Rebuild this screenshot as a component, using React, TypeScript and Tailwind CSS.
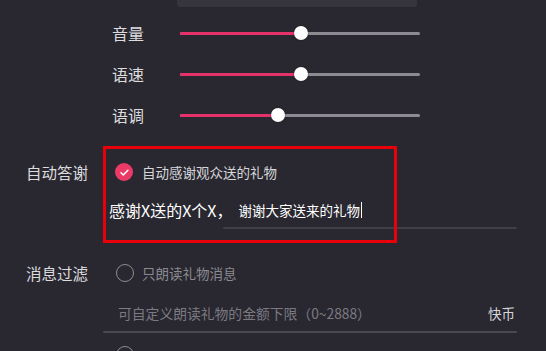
import { useState } from 'react'

interface SliderRowProps {
  label: string
  value: number
}

function SliderRow({ label, value }: SliderRowProps) {
  return (
    <div className="flex h-[41px] items-center">
      <div className="ml-[112px] w-[68px] text-[16px] leading-none text-[#dcdcdf]">{label}</div>
      <div className="relative h-[14px] w-[240px]">
        {/* track */}
        <div className="absolute left-0 right-0 top-[6px] h-[3px] rounded-full bg-[#8c8b92]" />
        <div
          className="absolute left-0 top-[6px] h-[3px] rounded-full bg-[#e6326a]"
          style={{ width: `${value}%` }}
        />
        {/* thumb */}
        <div
          className="absolute top-0 h-[14px] w-[14px] -translate-x-1/2 rounded-full bg-white shadow-[0_0_2px_rgba(0,0,0,0.5)]"
          style={{ left: `${value}%` }}
        />
      </div>
    </div>
  )
}

export default function App() {
  const [thanks, setThanks] = useState(true)

  return (
    <div
      className="relative h-[351px] w-[546px] overflow-hidden bg-[#292830]"
      style={{ fontFamily: '"Noto Sans CJK SC", "Noto Sans", sans-serif' }}
    >
      {/* top panel edge */}
      <div className="ml-[177px] h-[7px] w-[240px] rounded-b-[3px] bg-[#36353d]" />

      {/* voice sliders */}
      <div className="mt-[5px]">
        <SliderRow label="音量" value={50.5} />
        <SliderRow label="语速" value={50.5} />
        <SliderRow label="语调" value={41} />
      </div>

      {/* auto thanks */}
      <div className="mt-[25px] flex">
        <div className="w-[100px] pl-[26px] text-[15.5px] leading-[24px] text-[#dcdcdf]">自动答谢</div>
        <div className="flex-1">
          <button
            className="ml-[15px] flex h-[24px] items-center gap-[9px]"
            onClick={() => setThanks(!thanks)}
          >
            <span className="flex h-[18px] w-[18px] items-center justify-center rounded-full bg-[#ec3a67]">
              {thanks && (
                <svg width="11" height="11" viewBox="0 0 12 12" fill="none">
                  <path d="M2.2 6.3l2.5 2.4 5-5.2" stroke="white" strokeWidth="1.7" strokeLinecap="round" strokeLinejoin="round" />
                </svg>
              )}
            </span>
            <span className="text-[13.5px] text-[#d6d6da]">自动感谢观众送的礼物</span>
          </button>
          <div className="mt-[15px] flex h-[22px] items-center pl-[9px] text-white">
            <span className="text-[16px]">感谢X送的X个X，</span>
            <span className="ml-[6px] text-[13.5px]">谢谢大家送来的礼物</span>
            <span className="ml-[1px] h-[16px] w-px bg-white" />
          </div>
          <div className="ml-[123px] mt-[6px] h-[2px] w-[294px] rounded-full bg-[#403f47]" />
        </div>
      </div>

      {/* message filter */}
      <div className="mt-[32px] flex">
        <div className="w-[100px] pl-[26px] text-[15.5px] leading-[24px] text-[#dcdcdf]">消息过滤</div>
        <div className="w-[417px]">
          <div className="ml-[16px] flex h-[24px] items-center gap-[8px]">
            <span className="h-[18px] w-[18px] rounded-full border-[1.5px] border-[#8d8c93]" />
            <span className="text-[13.5px] text-[#8b8a91]">只朗读礼物消息</span>
          </div>
          <div className="mt-[17px] flex h-[22px] items-center justify-between pl-[18px] pr-[2px]">
            <span className="text-[13.8px] text-[#7b7a82]">可自定义朗读礼物的金额下限（0~2888）</span>
            <span className="text-[13.5px] text-[#d6d6da]">快币</span>
          </div>
          <div className="ml-[3px] mt-[7px] h-[2px] w-[414px] rounded-full bg-[#4a4951]" />
          <div className="ml-[16px] mt-[13px] h-[18px] w-[18px] rounded-full border-[1.5px] border-[#8d8c93]" />
        </div>
      </div>

      {/* annotation frame */}
      <div className="pointer-events-none absolute left-[103px] top-[146px] h-[97px] w-[294px] border-[3px] border-[#e8000b]" />
    </div>
  )
}
